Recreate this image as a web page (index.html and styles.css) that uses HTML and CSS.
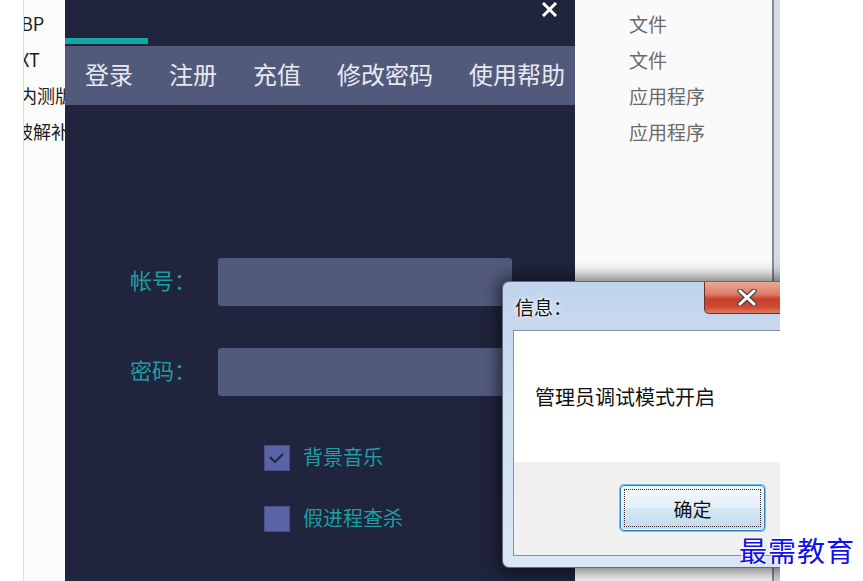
FILE: index.html
```html
<!DOCTYPE html>
<html lang="zh-CN">
<head>
<meta charset="utf-8">
<title>登录</title>
<link rel="stylesheet" href="styles.css">
</head>
<body>
<div class="screen">
  <div class="gutter"></div>
  <div class="filelist">
    <div class="fl-item s1">BP</div>
    <div class="fl-item s2">XT</div>
    <div class="fl-item s2">内测版</div>
    <div class="fl-item s3">破解补丁</div>
  </div>
  <div class="app">
    <div class="app-head">
      <svg class="close-x" width="15" height="15" viewBox="0 0 15 15"><path d="M2 2 L13 13 M13 2 L2 13" stroke="#ffffff" stroke-width="3" stroke-linecap="square"/></svg>
    </div>
    <div class="indicator"></div>
    <div class="tabs">
      <span class="tab">登录</span>
      <span class="tab">注册</span>
      <span class="tab">充值</span>
      <span class="tab">修改密码</span>
      <span class="tab">使用帮助</span>
    </div>
    <div class="form">
      <div class="row">
        <span class="label">帐号：</span>
        <div class="input"></div>
      </div>
      <div class="row row2">
        <span class="label">密码：</span>
        <div class="input"></div>
      </div>
      <div class="check check1">
        <span class="box"><svg width="26" height="26" viewBox="0 0 26 26"><path d="M6 12 L11 17 L19 9" fill="none" stroke="#22263f" stroke-width="2.2"/></svg></span>
        <span class="check-label">背景音乐</span>
      </div>
      <div class="check check2">
        <span class="box"></span>
        <span class="check-label">假进程查杀</span>
      </div>
    </div>
  </div>
  <div class="explorer">
    <div class="ex-item">文件</div>
    <div class="ex-item">文件</div>
    <div class="ex-item">应用程序</div>
    <div class="ex-item">应用程序</div>
  </div>
  <div class="edge"></div>

  <div class="dialog">
    <div class="dlg-title">信息：</div>
    <div class="dlg-close"><svg width="20" height="17" viewBox="0 0 20 17"><path d="M3 2 L17 15 M17 2 L3 15" stroke="#4a4a4a" stroke-width="5.5" stroke-linecap="round"/><path d="M3 2 L17 15 M17 2 L3 15" stroke="#ffffff" stroke-width="3" stroke-linecap="round"/></svg></div>
    <div class="dlg-client">
      <div class="dlg-msg">管理员调试模式开启</div>
      <div class="dlg-foot">
        <div class="dlg-btn"><span>确定</span></div>
      </div>
    </div>
  </div>
</div>
<div class="watermark">最需教育</div>
</body>
</html>
```
FILE: styles.css
```css
* { box-sizing: border-box; }
html, body { margin: 0; padding: 0; }
body {
  width: 863px;
  height: 581px;
  background: #ffffff;
  font-family: "Noto Sans CJK SC", "Noto Sans", sans-serif;
  position: relative;
  overflow: hidden;
}
.screen {
  width: 780px;
  height: 581px;
  display: flex;
  position: relative;
  overflow: hidden;
}
.gutter {
  width: 24px;
  background: #ffffff;
  border-right: 1px solid #dddddd;
}
.filelist {
  width: 41px;
  background: #fbfbfb;
  overflow: hidden;
  padding-top: 5px;
}
.fl-item {
  height: 36px;
  line-height: 36px;
  font-size: 18px;
  color: #1c1c1c;
  white-space: nowrap;
}
.s1 { margin-left: -3px; }
.s2 { margin-left: -5px; }
.s3 { margin-left: -9px; }

.app {
  width: 510px;
  background: #20243c;
  display: flex;
  flex-direction: column;
}
.app-head {
  height: 38px;
  display: flex;
  justify-content: flex-end;
  align-items: flex-start;
  padding: 2px 18px 0 0;
}
.indicator {
  width: 83px;
  height: 6px;
  background: #13a8a3;
  margin-bottom: 2px;
}
.tabs {
  height: 59px;
  background: #525a7c;
  display: flex;
  align-items: center;
  gap: 36px;
  padding: 0 0 4px 20px;
}
.tab {
  font-size: 24px;
  color: #e8e9f0;
  line-height: 1;
  white-space: nowrap;
}
.form {
  padding-top: 153px;
}
.row {
  display: flex;
  align-items: center;
  gap: 22px;
  padding-left: 65px;
}
.row2 { margin-top: 42px; }
.label {
  width: 66px;
  font-size: 22px;
  color: #1d9fa1;
  white-space: nowrap;
  margin-top: -6px;
}
.input {
  width: 294px;
  height: 48px;
  background: #525a7c;
  border-radius: 3px;
}
.check {
  display: flex;
  align-items: center;
  gap: 13px;
  height: 26px;
  padding-left: 199px;
}
.check1 { margin-top: 49px; }
.check2 { margin-top: 35px; }
.box {
  width: 26px;
  height: 26px;
  flex: none;
  background: #5b63a7;
  border: 1px solid #474e8a;
  display: block;
  position: relative;
}
.box svg { position: absolute; left: -1px; top: -1px; }
.check-label {
  font-size: 20px;
  line-height: 26px;
  color: #1d9fa1;
  white-space: nowrap;
  margin-top: -3px;
}

.explorer {
  width: 199px;
  background: #fafafa;
  border-right: 2px solid #8a8a8a;
  padding-top: 6px;
  padding-left: 54px;
}
.ex-item {
  height: 36px;
  line-height: 36px;
  font-size: 19px;
  color: #6a6a6a;
  white-space: nowrap;
}
.edge {
  width: 6px;
  background: #d4dce7;
}

.dialog {
  position: absolute;
  left: 502px;
  top: 281px;
  width: 300px;
  height: 287px;
  border: 1px solid #5b6b7d;
  border-right: none;
  border-radius: 7px 0 0 7px;
  background: linear-gradient(180deg, #bfd4ec 0%, #cfdff1 40%, #dae6f3 100%);
  box-shadow: 0 0 16px 4px rgba(0, 0, 0, 0.55);
}
.dlg-title {
  height: 48px;
  display: flex;
  align-items: center;
  padding-left: 12px;
  font-size: 19px;
  color: #111111;
  text-shadow: 0 0 6px #ffffff, 0 0 3px #ffffff;
}
.dlg-close {
  position: absolute;
  left: 201px;
  top: 0;
  width: 100px;
  height: 32px;
  border: 1px solid #6e3127;
  border-top: none;
  border-radius: 0 0 0 5px;
  background: linear-gradient(180deg, #e9a998 0%, #dc7c68 40%, #c63f28 55%, #cf4a33 80%, #e07a62 100%);
  display: flex;
  align-items: center;
  padding-left: 32px;
}
.dlg-client {
  margin-left: 10px;
  height: 226px;
  border: 1px solid #8593a4;
  border-right: none;
  display: flex;
  flex-direction: column;
}
.dlg-msg {
  height: 131px;
  background: #ffffff;
  display: flex;
  align-items: center;
  padding-left: 21px;
  font-size: 20px;
  color: #111111;
}
.dlg-foot {
  flex: 1;
  background: #f0f0f0;
  padding: 23px 0 0 106px;
}
.dlg-btn {
  width: 145px;
  height: 46px;
  border: 1px solid #2f7fb8;
  border-radius: 4px;
  box-shadow: 0 0 0 1px #6cc6ee, inset 0 0 0 1px #e8f6fd;
  background: linear-gradient(180deg, #f3f8fc 0%, #e5eff8 48%, #d3e6f4 52%, #c2dbee 100%);
  display: flex;
  align-items: center;
  justify-content: center;
  position: relative;
  font-size: 19px;
  color: #111111;
}
.dlg-btn::after {
  content: "";
  position: absolute;
  left: 3px;
  top: 3px;
  right: 3px;
  bottom: 3px;
  border: 1px dotted #3a2a2a;
}
.watermark {
  position: absolute;
  left: 739px;
  top: 530px;
  font-size: 28px;
  letter-spacing: 1px;
  color: #1010ee;
  white-space: nowrap;
  text-shadow: 0 0 3px #ffffff, 0 0 3px #ffffff;
}
```
